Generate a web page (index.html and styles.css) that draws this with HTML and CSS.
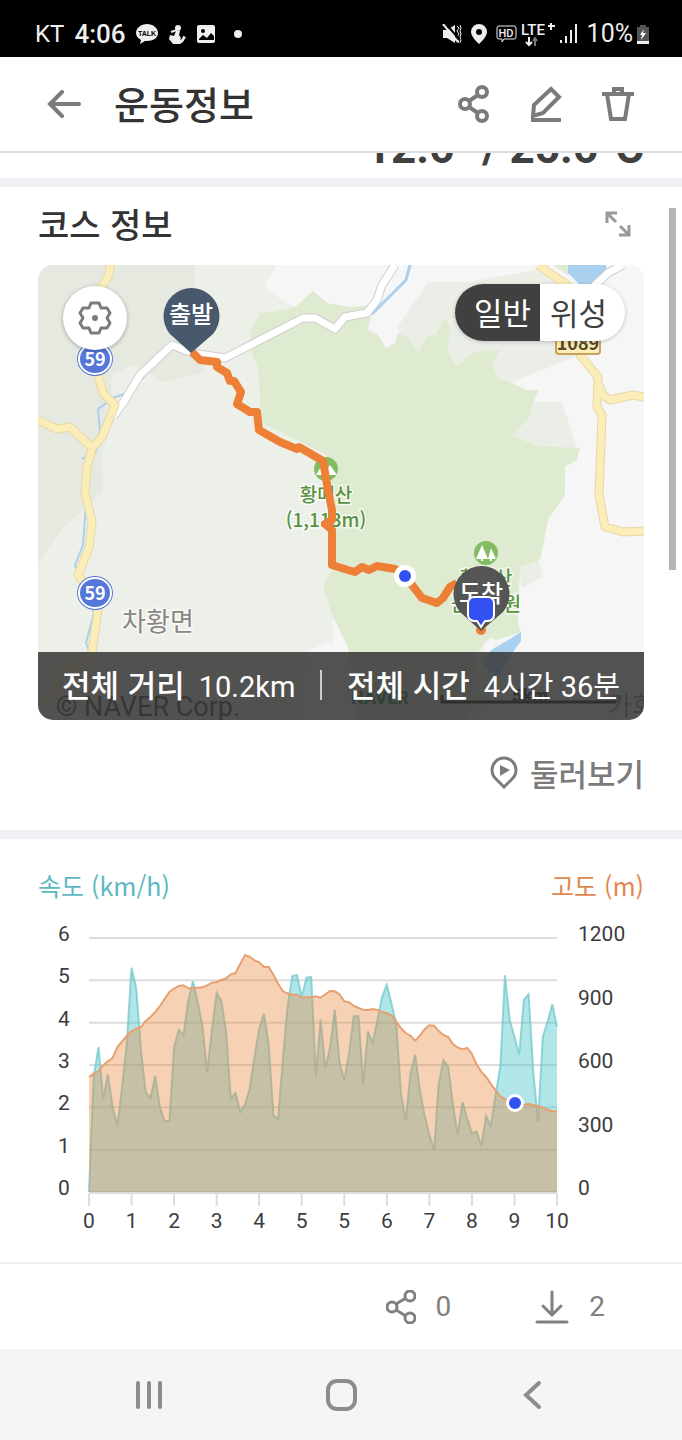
FILE: index.html
```
<!DOCTYPE html>
<html lang="ko">
<head>
    <meta charset="UTF-8">
    <meta name="viewport" content="width=device-width, initial-scale=1.0">
    <title>운동정보</title>
    <link rel="stylesheet" href="styles.css">
</head>
<body>
    <div class="status-bar">
        <div class="status-left">
            <span class="carrier">KT</span>
            <span class="clock">4:06</span>
            <svg width="22" height="20" viewBox="0 0 22 20">
                <path d="M11 0C5 0 0 4 0 9c0 3 2 5 5 7l-1 4 5-3h2c6 0 11-3 11-8S17 0 11 0z" fill="#eee"/>
                <text x="11" y="12" class="talk">TALK</text>
            </svg>
            <svg class="gap" width="17" height="20" viewBox="0 0 17 20" fill="#eee">
                <circle cx="9" cy="4" r="3"/>
                <path d="M7 7h4l-1 4 2 3-1 2 2-1 1-3 3 1-3 5-3 2H4l-4-5 1-4 4 1z"/>
                <path d="M2 8l6-2" stroke="#eee" stroke-width="2"/>
            </svg>
            <svg class="gap" width="18" height="18" viewBox="0 0 18 18">
                <rect width="18" height="18" rx="2" fill="#eee"/>
                <circle cx="6" cy="6" r="2" fill="#000"/>
                <path d="M2 14l4-4 4 3 4-5 3 3v4H2z" fill="#000"/>
            </svg>
            <span class="dot"></span>
        </div>
        <div class="status-right">
            <svg width="20" height="20" viewBox="0 0 20 20">
                <path d="M1 6h4l8-5v18l-8-5H1z" fill="#eee"/>
                <path d="M15 2l2 2-2 3 2 3-2 3 2 3-1 3M18 1l1 3-1 3 1 3-1 3 1 3-1 3" stroke="#eee" fill="none"/>
                <path d="M4 0l14 16" stroke="#000" stroke-width="2"/>
                <path d="M1 0l15 18" stroke="#eee" stroke-width="2"/>
            </svg>
            <svg width="16" height="20" viewBox="0 0 16 20">
                <path d="M8 0a8 8 0 0 0-8 8c0 5 8 12 8 12s8-7 8-12a8 8 0 0 0-8-8zm0 5a3 3 0 1 1 0 6 3 3 0 0 1 0-6z" fill="#eee"/>
            </svg>
            <svg width="21" height="18" viewBox="0 0 21 18">
                <path d="M3 1h15a2 2 0 0 1 2 2v9a2 2 0 0 1-2 2H8l-2 3v-3H3a2 2 0 0 1-2-2V3a2 2 0 0 1 2-2z" fill="none" stroke="#eee"/>
                <text x="10" y="12" class="hd">HD</text>
            </svg>
            <svg class="lte" width="34" height="26" viewBox="0 0 34 26">
                <text x="0" y="14" class="lte-text">LTE</text>
                <path d="M27 5h7M30 2v7" stroke="#eee" stroke-width="2"/>
                <path d="M8 16v8M5 21l3 3 3-3" stroke="#eee" stroke-width="2" fill="none"/>
                <path d="M14 25v-8M12 20l2-3 2 3" stroke="#777" stroke-width="2" fill="none"/>
            </svg>
            <svg width="18" height="19" viewBox="0 0 18 19" fill="#eee">
                <path d="M0 16h2v3H0zM5 12h2v7H5zM10 6h2v13h-2zM15 0h2v19h-2z"/>
            </svg>
            <span class="battery-text">10%</span>
            <svg class="battery" width="12" height="20" viewBox="0 0 12 20">
                <path d="M3 1h6v2h3v17H0V3h3z" fill="#555"/>
                <path d="M0 17h12v3H0z" fill="#eee"/>
                <path d="M7 5l-4 6h2l-1 5 5-7H6z" fill="#fff"/>
            </svg>
        </div>
    </div>

    <header class="app-header">
        <button class="icon-btn" aria-label="뒤로">
            <svg width="34" height="28" viewBox="0 0 34 28" fill="none" stroke="#7b7b7b" stroke-width="4" stroke-linecap="round">
                <path d="M15 2L3 14l12 12M3 14h29"/>
            </svg>
        </button>
        <h1>운동정보</h1>
        <div class="header-actions">
            <button class="icon-btn" aria-label="공유">
                <svg width="32" height="38" viewBox="0 0 32 38" fill="none" stroke="#7b7b7b" stroke-width="4">
                    <circle cx="24" cy="7" r="5"/><circle cx="7" cy="19" r="5"/><circle cx="24" cy="31" r="5"/>
                    <path d="M11 16l9-6M11 22l9 6"/>
                </svg>
            </button>
            <button class="icon-btn" aria-label="수정">
                <svg width="32" height="36" viewBox="0 0 32 36" fill="none" stroke="#7b7b7b" stroke-width="4">
                    <path d="M21 3l8 8-16 16-10 3 1-11zM1 34h30"/>
                </svg>
            </button>
            <button class="icon-btn" aria-label="삭제">
                <svg width="32" height="36" viewBox="0 0 32 36" fill="none" stroke="#7b7b7b" stroke-width="4">
                    <path d="M0 8h32M5 8l4 25h14l4-25M12 8V3h8v5"/>
                </svg>
            </button>
        </div>
    </header>

    <main>
        <div class="scrollbar"></div>
        <div class="temperature"><span>12.6° / 25.6°C</span></div>

        <section class="course">
            <div class="section-title">
                <h2>코스 정보</h2>
                <button class="icon-btn" aria-label="확대">
                    <svg width="26" height="26" viewBox="0 0 26 26" fill="none" stroke="#999" stroke-width="3">
                        <path d="M2 12V2h10M2 2l9 9M24 14v10H14M24 24l-9-9"/>
                    </svg>
                </button>
            </div>

            <div class="map">
                <svg class="map-canvas" viewBox="0 0 606 455" preserveAspectRatio="xMidYMid slice">
                    <rect width="606" height="455" fill="#edf0e9"/>
                    <path d="M0 0H157L158 60 166 108 125 117 95 100 74 110 72 150 64 190 65 227 25 263 0 298z" fill="#e5e9df"/>
                    <path d="M239 0H606V455H440L459 387 460 300 320 60 255 42 232 27 227 20z" fill="#f6f6f6"/>
                    <path d="M269 387l20-11 15 11 6 68h-50zM295 350l19 37v68h-20z" fill="#f6f6f6"/>
                    <path d="M390 17H430L499 5 550 40 560 82 475 117 400 130 359 63zM470 137H524L539 183 560 183 470 190zM480 300L500 294 505 312 484 323z" fill="#ebeee7"/>
                    <path d="M539 183H580V200H530z" fill="#f6f6f6"/>
                    <!-- forest -->
                    <path d="M222 48L235 47 257 42 275 26 289 38 312 42 335 40 330 65 340 70 348 83 357 78 360 68 370 72 380 87 390 70 397 70 407 53 412 62 410 87 419 101 435 87 462 85 454 98 460 113 474 118 489 125 501 125 494 140 492 152 474 170 499 181 542 183 539 195 527 202 527 230 510 255 505 282 502 295 482 302 480 358 483 367 459 375 450 375 440 387 430 455H320L310 382 295 352 285 323 289 313 296 300 294 260 289 190 222 157 222 130 220 103 214 90 212 67z" fill="#dfebd0"/>
                    <path d="M445 380l8-8 6 4-3 9-8 4z" fill="#f6f6f6"/>
                    <!-- water -->
                    <path d="M530 0H568L569 5 555 22H544L530 8zM483 367V376L475 387 460 412 445 400 452 386z" fill="#a9d0ef"/>
                    <path d="M515 0H530V10z" fill="#dfebd0"/>
                    <path d="M372 0l-4 15-33 33-12 4" fill="none" stroke="#a9d0ef" stroke-width="3"/>
                    <path d="M108 109l-15 18-16 5-17 12 2 22-4 20-14 8M48 240l-3 40-8 20 8 18 11 30-8 30 4 10" fill="none" stroke="#a9d0ef" stroke-width="2"/>
                    <!-- roads -->
                    <g fill="none" stroke-linejoin="round">
                        <g stroke="#d0d0d0" stroke-width="9">
                            <path d="M75 152L87 135 102 110 134 80 154 88 187 93 265 53 277 53 297 64 307 52 329 48 339 35 344 20 357 0M585 0L570 8 555 22"/>
                            <path class="road-white" d="M75 152L87 135 102 110 134 80 154 88 187 93 265 53 277 53 297 64 307 52 329 48 339 35 344 20 357 0M585 0L570 8 555 22"/>
                        </g>
                        <g stroke="#e6d7a8" stroke-width="9">
                            <path id="route-59" d="M72 0L71 10 62 25 58 60 60 110 65 128 77 140 64 172 54 183 49 203 47 227 54 257 51 283 40 310 52 325 60 345 54 387 54 398 20 407 17 425 0 440M0 155L19 164 32 162 54 183"/>
                            <path id="route-1089" d="M500 0L529 20 542 90 560 112 559 142 564 150 561 230 567 262 585 267 606 266M561 120L565 130 572 135 595 130 606 132"/>
                        </g>
                        <use href="#route-59" class="road-yellow"/>
                        <use href="#route-1089" class="road-yellow"/>
                    </g>
                    <!-- road numbers -->
                    <g fill="#5677da">
                        <ellipse cx="57" cy="94" rx="18" ry="17"/><ellipse cx="57" cy="328" rx="18" ry="17"/>
                        <g fill="none" stroke="#fff" stroke-width="2">
                            <ellipse cx="57" cy="94" rx="16" ry="15"/><ellipse cx="57" cy="328" rx="16" ry="15"/>
                        </g>
                    </g>
                    <text x="57" y="101" class="road-no">59</text>
                    <text x="57" y="335" class="road-no">59</text>
                    <rect x="518" y="62" width="44" height="27" rx="3" fill="#fcecb6" stroke="#c9a15e" stroke-width="2"/>
                    <text x="540" y="85" class="road-no-local">1089</text>
                    <!-- places -->
                    <circle cx="288" cy="204" r="12" fill="#82bd64"/>
                    <path d="M278 210l6-10 4 6 4-6 7 10z" fill="#fff"/>
                    <text x="288" y="237" class="place">황매산</text>
                    <text x="288" y="262" class="place">(1,113m)</text>
                    <circle cx="448" cy="288" r="12" fill="#82bd64"/>
                    <path d="M444 280l6 14h-5v2h-2v-2h-5zM453 283l5 11h-4v2h-2v-2h-2z" fill="#fff"/>
                    <text x="448" y="320" class="place">황매산</text>
                    <text x="448" y="346" class="place">군립공원</text>
                    <text x="120" y="366" class="town">차황면</text>
                    <text x="18" y="451" class="copyright">© NAVER Corp.</text>
                    <text x="342" y="439" class="naver">NAVER</text>
                    <path d="M404 430v7h177v-7" fill="none" stroke="#000" stroke-width="3"/>
                    <text x="492" y="437" class="scale">5km</text>
                    <text x="570" y="450" class="town town-left">가회</text>
                    <!-- track -->
                    <path d="M154 87L162 95 179 97 179 102 189 108 192 116 196 116 203 127 199 139 212 147 219 147 221 165 242 177 259 184 261 182 285 196 290 225 294 245 294 255 287 259 294 265 294 300 310 305 317 307 324 302 331 305 339 301 357 304 367 311 384 333 399 338 405 333 412 322 419 318" class="track"/>
                    <circle cx="443" cy="365" r="5" fill="#ee7f37"/>
                    <circle cx="367" cy="311" r="11" fill="#fff"/>
                    <circle cx="367" cy="311" r="6" fill="#3350f0"/>
                    <!-- start / finish pins -->
                    <path d="M153 88L132 69A28 28 0 1 1 175 69z" fill="#48596d"/>
                    <text x="153" y="58" class="pin-text">출발</text>
                    <path d="M443 366L422 347A28 28 0 1 1 465 347z" fill="#555"/>
                    <text x="443" y="337" class="pin-text">도착</text>
                    <path d="M436 332h14a6 6 0 0 1 6 6v12a6 6 0 0 1-6 6h-3l-4 6-4-6h-3a6 6 0 0 1-6-6v-12a6 6 0 0 1 6-6z" fill="#3350f0" stroke="#fff" stroke-width="2"/>
                </svg>

                <button class="map-settings" aria-label="지도 설정">
                    <svg width="36" height="36" viewBox="-18 -18 36 36" fill="none" stroke="#7b7b7b" stroke-width="3" stroke-linejoin="round">
                        <path d="M-4-15H4L6-10H12L15-5 12 0 15 5 12 10H6L4 15H-4L-6 10H-12L-15 5-12 0-15-5-12-10H-6z"/>
                        <circle r="3" fill="#7b7b7b" stroke="none"/>
                    </svg>
                </button>
                <div class="map-type">
                    <button class="active">일반</button>
                    <button>위성</button>
                </div>
                <div class="map-summary">
                    <span><strong>전체 거리</strong>10.2km</span>
                    <span class="divider"></span>
                    <span><strong>전체 시간</strong>4시간 36분</span>
                </div>
            </div>

            <div class="look-around">
                <a href="#">
                    <svg width="28" height="34" viewBox="0 0 28 34">
                        <path d="M14 31L6 23A12 12 0 1 1 22 23z" fill="none" stroke="#7b7b7b" stroke-width="3"/>
                        <path d="M10 9l10 5-10 6z" fill="#7b7b7b"/>
                    </svg>
                    둘러보기
                </a>
            </div>
        </section>

        <section class="graph">
            <div class="graph-legend">
                <span class="speed">속도 (km/h)</span>
                <span class="altitude">고도 (m)</span>
            </div>
            <svg class="chart" viewBox="0 0 606 310">
                <g id="grid"></g>
                <path id="speedArea" fill="#4ac5cb" fill-opacity="0.43"/>
                <path id="speedLine" fill="none" stroke="#6cc4c8" stroke-opacity="0.7" stroke-width="2"/>
                <path id="altitudeArea" fill="#ea863a" fill-opacity="0.38"/>
                <path id="altitudeLine" fill="none" stroke="#e7a070" stroke-width="2"/>
                <circle cx="477" cy="183" r="9" fill="#fff"/>
                <circle cx="477" cy="183" r="6" fill="#3350f0"/>
            </svg>
        </section>
    </main>

    <footer class="counts">
        <button class="count-btn">
            <svg width="30" height="34" viewBox="0 0 30 34" fill="none" stroke="#808080" stroke-width="3">
                <circle cx="24" cy="6" r="5"/><circle cx="6" cy="17" r="5"/><circle cx="24" cy="28" r="5"/>
                <path d="M10 14l10-6M10 20l10 6"/>
            </svg>
            <span>0</span>
        </button>
        <button class="count-btn">
            <svg width="34" height="34" viewBox="0 0 34 34" fill="none" stroke="#808080" stroke-width="3" stroke-linecap="round">
                <path d="M17 2v23M8 16l9 9 9-9M2 32h30"/>
            </svg>
            <span>2</span>
        </button>
    </footer>

    <nav class="system-nav">
        <button class="icon-btn" aria-label="최근 앱">
            <svg width="30" height="30" viewBox="0 0 30 30" stroke="#8c8c8c" stroke-width="4" stroke-linecap="round">
                <path d="M4 3v24M15 3v24M26 3v24"/>
            </svg>
        </button>
        <button class="icon-btn" aria-label="홈">
            <svg width="32" height="32" viewBox="0 0 32 32" fill="none" stroke="#8c8c8c" stroke-width="4">
                <rect x="3" y="2" width="27" height="28" rx="9"/>
            </svg>
        </button>
        <button class="icon-btn" aria-label="이전">
            <svg width="30" height="30" viewBox="0 0 30 30" fill="none" stroke="#8c8c8c" stroke-width="4" stroke-linecap="round">
                <path d="M21 3L8 15l13 12"/>
            </svg>
        </button>
    </nav>

    <script src="chart.js"></script>
</body>
</html>
```
FILE: chart.js
```
// plot box inside the svg
const LEFT = 51, RIGHT = 519, TOP = 18, BOTTOM = 272;
// samples are stored in raster rows, row 233 = top of the plot, row 995 = zero
const ROW_TOP = 233, ROW_ZERO = 995;

const altitude = [
    650, 640, 633, 615, 603, 593, 560, 543, 527, 513, 505, 500, 482, 470, 455, 437, 416, 395, 385, 377,
    375, 384, 383, 382, 381, 375, 367, 365, 359, 354, 342, 338, 310, 285, 289, 300, 306, 320, 319, 343,
    370, 393, 399, 403, 403, 412, 411, 411, 408, 412, 402, 392, 393, 402, 423, 426, 436, 443, 448, 449,
    446, 449, 455, 459, 465, 484, 504, 518, 526, 541, 526, 507, 495, 496, 512, 524, 530, 551, 562, 567,
    563, 581, 612, 635, 650, 670, 690, 708, 716, 725, 729, 737, 735, 730, 735, 737, 742, 748, 753, 753
];
const speed = [
    995, 650, 560, 715, 643, 740, 798, 680, 550, 322, 385, 570, 695, 713, 647, 740, 782, 782, 560, 508,
    525, 420, 363, 425, 500, 635, 510, 398, 422, 515, 715, 698, 755, 732, 685, 590, 505, 460, 550, 765,
    777, 600, 440, 347, 344, 410, 352, 350, 648, 478, 625, 560, 448, 605, 660, 580, 468, 468, 672, 513,
    548, 480, 410, 373, 430, 490, 700, 780, 640, 583, 690, 765, 825, 868, 670, 600, 620, 735, 823, 725,
    775, 819, 813, 857, 767, 798, 705, 620, 345, 480, 530, 583, 418, 402, 640, 785, 530, 485, 432, 500
];

function line(samples) {
    return samples.map((row, i) => {
        const x = LEFT + i * (RIGHT - LEFT) / (samples.length - 1);
        const y = TOP + (row - ROW_TOP) * (BOTTOM - TOP) / (ROW_ZERO - ROW_TOP);
        return x.toFixed(1) + ' ' + y.toFixed(1);
    }).join(' L');
}

function area(samples) {
    return `M${LEFT} ${BOTTOM} L${line(samples)} L${RIGHT} ${BOTTOM} Z`;
}

document.getElementById('speedArea').setAttribute('d', area(speed));
document.getElementById('speedLine').setAttribute('d', 'M' + line(speed));
document.getElementById('altitudeArea').setAttribute('d', area(altitude));
document.getElementById('altitudeLine').setAttribute('d', 'M' + line(altitude));

let grid = '';
for (let i = 0; i <= 6; i++) {
    const y = BOTTOM - i * (BOTTOM - TOP) / 6;
    grid += `<line x1="${LEFT}" x2="${RIGHT}" y1="${y}" y2="${y}"/>`;
    grid += `<text x="26" y="${y + 3}" class="tick-y">${i}</text>`;
}
for (let i = 0; i <= 4; i++) {
    const y = BOTTOM - i * (BOTTOM - TOP) / 4;
    grid += `<text x="540" y="${y + 3}" class="tick-alt">${i * 300}</text>`;
}
[0, 1, 2, 3, 4, 5, 5, 6, 7, 8, 9, 10].forEach((km, i) => {
    const x = LEFT + i * (RIGHT - LEFT) / 11;
    grid += `<line x1="${x}" x2="${x}" y1="274" y2="286"/>`;
    grid += `<text x="${x}" y="308" class="tick-x">${km}</text>`;
});
grid += `<line x1="${LEFT}" x2="${RIGHT}" y1="273" y2="273"/>`;
document.getElementById('grid').innerHTML = grid;
```
FILE: styles.css
```
* {
    box-sizing: border-box;
}
body {
    margin: 0;
    min-height: 100vh;
    display: flex;
    flex-direction: column;
    background: #fff;
    color: #333;
    font-family: "Noto Sans CJK KR", sans-serif;
}
svg {
    display: block;
    flex: none;
}
h1, h2 {
    margin: 0;
    font-weight: 500;
}
button {
    padding: 0;
    border: none;
    background: none;
    color: inherit;
    font-family: inherit;
    cursor: pointer;
}
.icon-btn {
    display: flex;
}

/* status bar */
.status-bar {
    display: flex;
    justify-content: space-between;
    height: 57px;
    padding: 10px 33px 0 35px;
    background: #000;
    color: #eee;
    font-family: Roboto, sans-serif;
}
.status-left, .status-right {
    display: flex;
    align-items: center;
}
.carrier {
    margin-right: 10px;
    font-size: 24px;
}
.clock {
    margin-right: 10px;
    font-size: 26px;
    font-weight: 500;
}
.gap {
    margin-left: 11px;
}
.dot {
    width: 8px;
    height: 8px;
    margin-left: 19px;
    border-radius: 50%;
    background: #eee;
}
.status-right {
    gap: 9px;
}
.status-right .lte {
    margin: 0 -4px 0 -5px;
}
.status-right .battery {
    margin-left: -5px;
}
.battery-text {
    font-size: 25px;
}
.talk {
    font: bold 7px "Liberation Sans", sans-serif;
    fill: #000;
    text-anchor: middle;
}
.hd {
    font: 500 11px Roboto, sans-serif;
    fill: #eee;
    text-anchor: middle;
}
.lte-text {
    font: 500 15px Roboto, sans-serif;
    fill: #eee;
}

/* header */
.app-header {
    display: flex;
    align-items: center;
    height: 96px;
    padding: 0 48px 0 47px;
    border-bottom: 2px solid #dedede;
}
.app-header h1 {
    flex: 1;
    margin-left: 33px;
    padding-bottom: 3px;
    font-size: 38px;
    line-height: 56px;
}
.header-actions {
    display: flex;
    align-items: center;
    gap: 40px;
}

main {
    position: relative;
    flex: 1;
}
.scrollbar {
    position: absolute;
    top: 55px;
    right: 6px;
    width: 7px;
    height: 362px;
    background: #b5b5b5;
}
.temperature {
    display: flex;
    justify-content: flex-end;
    align-items: flex-end;
    height: 25px;
    padding: 0 38px 5px;
    overflow: hidden;
    color: #404040;
    font: bold 44px/50px Roboto, sans-serif;
}

/* course */
.course, .graph {
    padding: 0 38px;
    border-top: 9px solid #f0f1f4;
}
.section-title {
    display: flex;
    justify-content: space-between;
    align-items: center;
    height: 78px;
    padding: 0 13px 5px 0;
}
.section-title h2 {
    font-size: 34px;
    line-height: 48px;
}
.map {
    position: relative;
    overflow: hidden;
    border-radius: 15px;
}
.map-canvas, .chart {
    width: 100%;
    height: auto;
}
.road-white {
    stroke: #fff;
    stroke-width: 7px;
}
.road-yellow {
    stroke: #fbedb8;
    stroke-width: 7px;
}
#route-59, #route-1089 {
    stroke-width: inherit;
}
.road-no, .road-no-local, .place {
    font-weight: bold;
    text-anchor: middle;
}
.road-no {
    font-size: 18px;
    fill: #fff;
}
.road-no-local {
    font-size: 18px;
    fill: #54482c;
}
.place, .town {
    stroke: #fff;
    stroke-opacity: 0.7;
    stroke-width: 3px;
    paint-order: stroke;
}
.place {
    font-size: 19px;
    font-weight: 500;
    fill: #56923f;
}
.town {
    font-size: 26px;
    fill: #8c8583;
    text-anchor: middle;
}
.town-left {
    text-anchor: start;
}
.copyright {
    font: 27px Roboto, sans-serif;
    fill: #333;
}
.naver, .scale {
    font: 900 18px Roboto, sans-serif;
    fill: #1a8a4a;
    text-anchor: middle;
}
.scale {
    fill: #222;
}
.track {
    fill: none;
    stroke: #ee7f37;
    stroke-width: 8px;
    stroke-linejoin: round;
}
.pin-text {
    font-size: 24px;
    font-weight: 500;
    fill: #fff;
    text-anchor: middle;
}
.map-settings {
    position: absolute;
    top: 21px;
    left: 25px;
    display: flex;
    align-items: center;
    justify-content: center;
    width: 64px;
    height: 64px;
    border-radius: 50%;
    background: #fff;
    box-shadow: 0 1px 4px rgba(0, 0, 0, 0.3);
}
.map-type {
    position: absolute;
    top: 19px;
    right: 19px;
    display: flex;
    overflow: hidden;
    border-radius: 29px;
    background: #fff;
    box-shadow: 0 1px 4px rgba(0, 0, 0, 0.2);
}
.map-type button {
    width: 85px;
    height: 57px;
    padding: 0 8px 2px 0;
    color: #404040;
    font-size: 31px;
    line-height: 55px;
}
.map-type .active {
    padding: 0 0 2px 10px;
    background: #404040;
    color: #fff;
}
.map-summary {
    position: absolute;
    right: 0;
    bottom: 0;
    left: 0;
    display: flex;
    align-items: center;
    justify-content: space-between;
    height: 68px;
    padding: 0 24px 2px;
    background: rgba(55, 55, 55, 0.86);
    color: #fff;
    font: 29px/48px Roboto, "Noto Sans CJK KR", sans-serif;
    white-space: nowrap;
}
.map-summary strong {
    margin-right: 14px;
    font: 500 31px/48px "Noto Sans CJK KR", sans-serif;
}
.map-summary .divider {
    width: 2px;
    height: 30px;
    background: #ccc;
}
.look-around {
    display: flex;
    justify-content: flex-end;
    align-items: center;
    height: 110px;
    padding-bottom: 5px;
}
.look-around a {
    display: flex;
    align-items: center;
    gap: 12px;
    color: #7b7b7b;
    font-size: 31px;
    font-weight: 500;
    line-height: 48px;
    text-decoration: none;
}

/* graph */
.graph {
    padding-top: 22px;
    padding-bottom: 32px;
}
.graph-legend {
    display: flex;
    justify-content: space-between;
    margin-bottom: 11px;
    font-size: 25px;
    line-height: 48px;
}
.speed {
    color: #5cb8c2;
}
.altitude {
    color: #e08850;
}
.chart line {
    stroke: #dcdcdc;
    stroke-width: 2px;
}
.chart text {
    fill: #3c3c40;
}
.tick-y, .tick-alt, .tick-x {
    font: 21px Roboto, sans-serif;
}
.tick-y, .tick-x {
    text-anchor: middle;
}

/* bottom */
.counts {
    display: flex;
    justify-content: flex-end;
    align-items: center;
    gap: 84px;
    height: 87px;
    padding-right: 77px;
    border-top: 2px solid #eef0f1;
}
.count-btn {
    display: flex;
    align-items: center;
    gap: 20px;
    color: #808080;
    font: 28px/40px Roboto, sans-serif;
}
.system-nav {
    display: flex;
    align-items: center;
    justify-content: space-around;
    height: 91px;
    padding: 0 54px;
    background: #f5f5f5;
}
```
